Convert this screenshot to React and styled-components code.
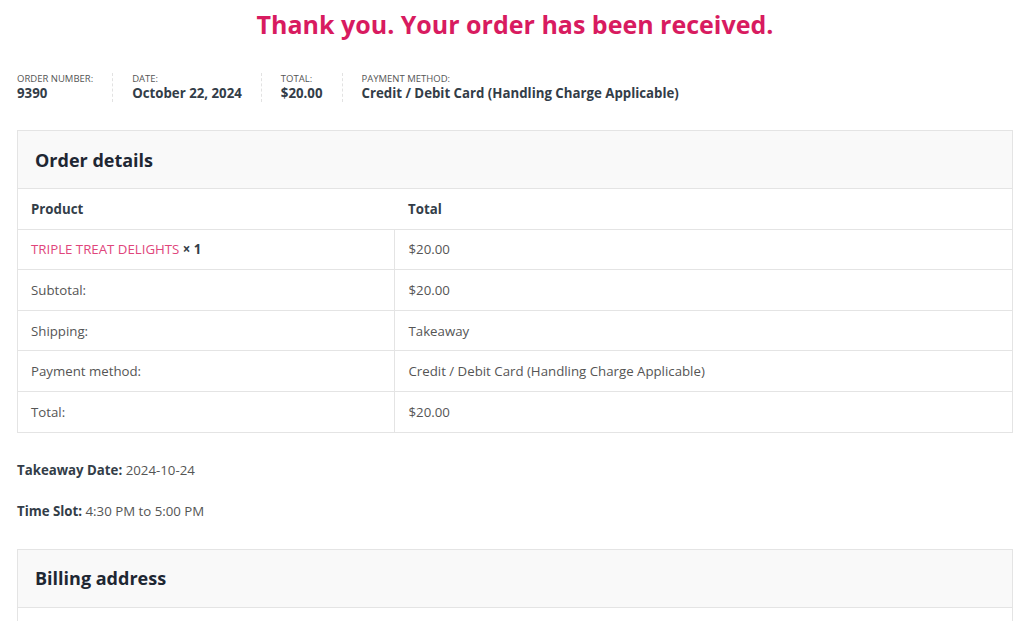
import React from 'react';
import styled, { createGlobalStyle } from 'styled-components';

const GlobalStyle = createGlobalStyle`
html, body {
    margin: 0;
    padding: 0;
    background: #fff;
}
body {
    font-family: "Open Sans", "Liberation Sans", sans-serif;
    color: #555;
    font-size: 14px;
}
`;

const Page = styled.div`
width: 996px;
padding: 0 11px 0 17px;
`;

const Title = styled.h1`
margin: 0;
padding-top: 7px;
text-align: center;
color: #d81b60;
font-size: 25px;
font-weight: 700;
line-height: 34px;
`;

const Overview = styled.ul`
list-style: none;
margin: 32px 0 0 0;
padding: 0;
display: flex;
`;

const OverviewItem = styled.li`
display: flex;
flex-direction: column;
padding: 0 19px 0 ${props => props.first ? '0' : '19px'};
border-right: ${props => props.last ? 'none' : '1px dashed #e2e2e2'};
`;

const OverviewLabel = styled.span`
font-size: 9.5px;
line-height: 12px;
text-transform: uppercase;
color: #555;
`;

const OverviewValue = styled.strong`
font-size: 13.25px;
line-height: 17px;
font-weight: 700;
color: #333d48;
`;

const Box = styled.section`
margin-top: ${props => props.top}px;
border: 1px solid #e4e4e4;
`;

const BoxHeader = styled.h2`
margin: 0;
height: 57px;
display: flex;
align-items: center;
padding-left: 17px;
background: #f9f9f9;
border-bottom: 1px solid #e4e4e4;
font-size: 18px;
font-weight: 700;
color: #1e2733;
`;

const Table = styled.table`
width: 100%;
border-collapse: collapse;
table-layout: fixed;
`;

const Cell = styled.td`
height: 39.6px;
padding: 0 13px 0 ${props => props.right ? '14px' : '13px'};
font-size: 13.25px;
color: #555;
text-align: left;
border-top: 1px solid #e4e4e4;
border-left: ${props => props.right ? '1px solid #e4e4e4' : 'none'};
`;

const HeadCell = styled.th`
height: 39.6px;
padding: 0 13px 0 ${props => props.right ? '14px' : '13px'};
font-size: 13.25px;
font-weight: 700;
color: #333d48;
text-align: left;
`;

const ProductLink = styled.a`
color: #e0457b;
text-decoration: none;
`;

const Qty = styled.strong`
color: #333d48;
`;

const Note = styled.p`
margin: ${props => props.top}px 0 0 0;
font-size: 13.25px;
line-height: 20px;
color: #555;
`;

const NoteLabel = styled.strong`
color: #333d48;
`;

const BillingBody = styled.div`
height: 40px;
`;

const overview = [
    { label: 'Order number:', value: '9390' },
    { label: 'Date:', value: 'October 22, 2024' },
    { label: 'Total:', value: '$20.00' },
    { label: 'Payment method:', value: 'Credit / Debit Card (Handling Charge Applicable)' },
];

const rows = [
    ['Subtotal:', '$20.00'],
    ['Shipping:', 'Takeaway'],
    ['Payment method:', 'Credit / Debit Card (Handling Charge Applicable)'],
    ['Total:', '$20.00'],
];

const App = () => {
    return (
        <Page>
            <GlobalStyle />
            <Title>Thank you. Your order has been received.</Title>
            <Overview>
                {overview.map((item, i) => (
                    <OverviewItem key={item.label} first={i === 0} last={i === overview.length - 1}>
                        <OverviewLabel>{item.label}</OverviewLabel>
                        <OverviewValue>{item.value}</OverviewValue>
                    </OverviewItem>
                ))}
            </Overview>

            <Box top={28}>
                <BoxHeader>Order details</BoxHeader>
                <Table>
                    <colgroup>
                        <col width="376" />
                        <col />
                    </colgroup>
                    <thead>
                        <tr>
                            <HeadCell>Product</HeadCell>
                            <HeadCell right>Total</HeadCell>
                        </tr>
                    </thead>
                    <tbody>
                        <tr>
                            <Cell>
                                <ProductLink href="#">TRIPLE TREAT DELIGHTS</ProductLink> <Qty>× 1</Qty>
                            </Cell>
                            <Cell right>$20.00</Cell>
                        </tr>
                        {rows.map(([label, value]) => (
                            <tr key={label}>
                                <Cell>{label}</Cell>
                                <Cell right>{value}</Cell>
                            </tr>
                        ))}
                    </tbody>
                </Table>
            </Box>

            <Note top={27}><NoteLabel>Takeaway Date:</NoteLabel> 2024-10-24</Note>
            <Note top={21}><NoteLabel>Time Slot:</NoteLabel> 4:30 PM to 5:00 PM</Note>

            <Box top={28}>
                <BoxHeader>Billing address</BoxHeader>
                <BillingBody />
            </Box>
        </Page>
    );
};

export default App;
